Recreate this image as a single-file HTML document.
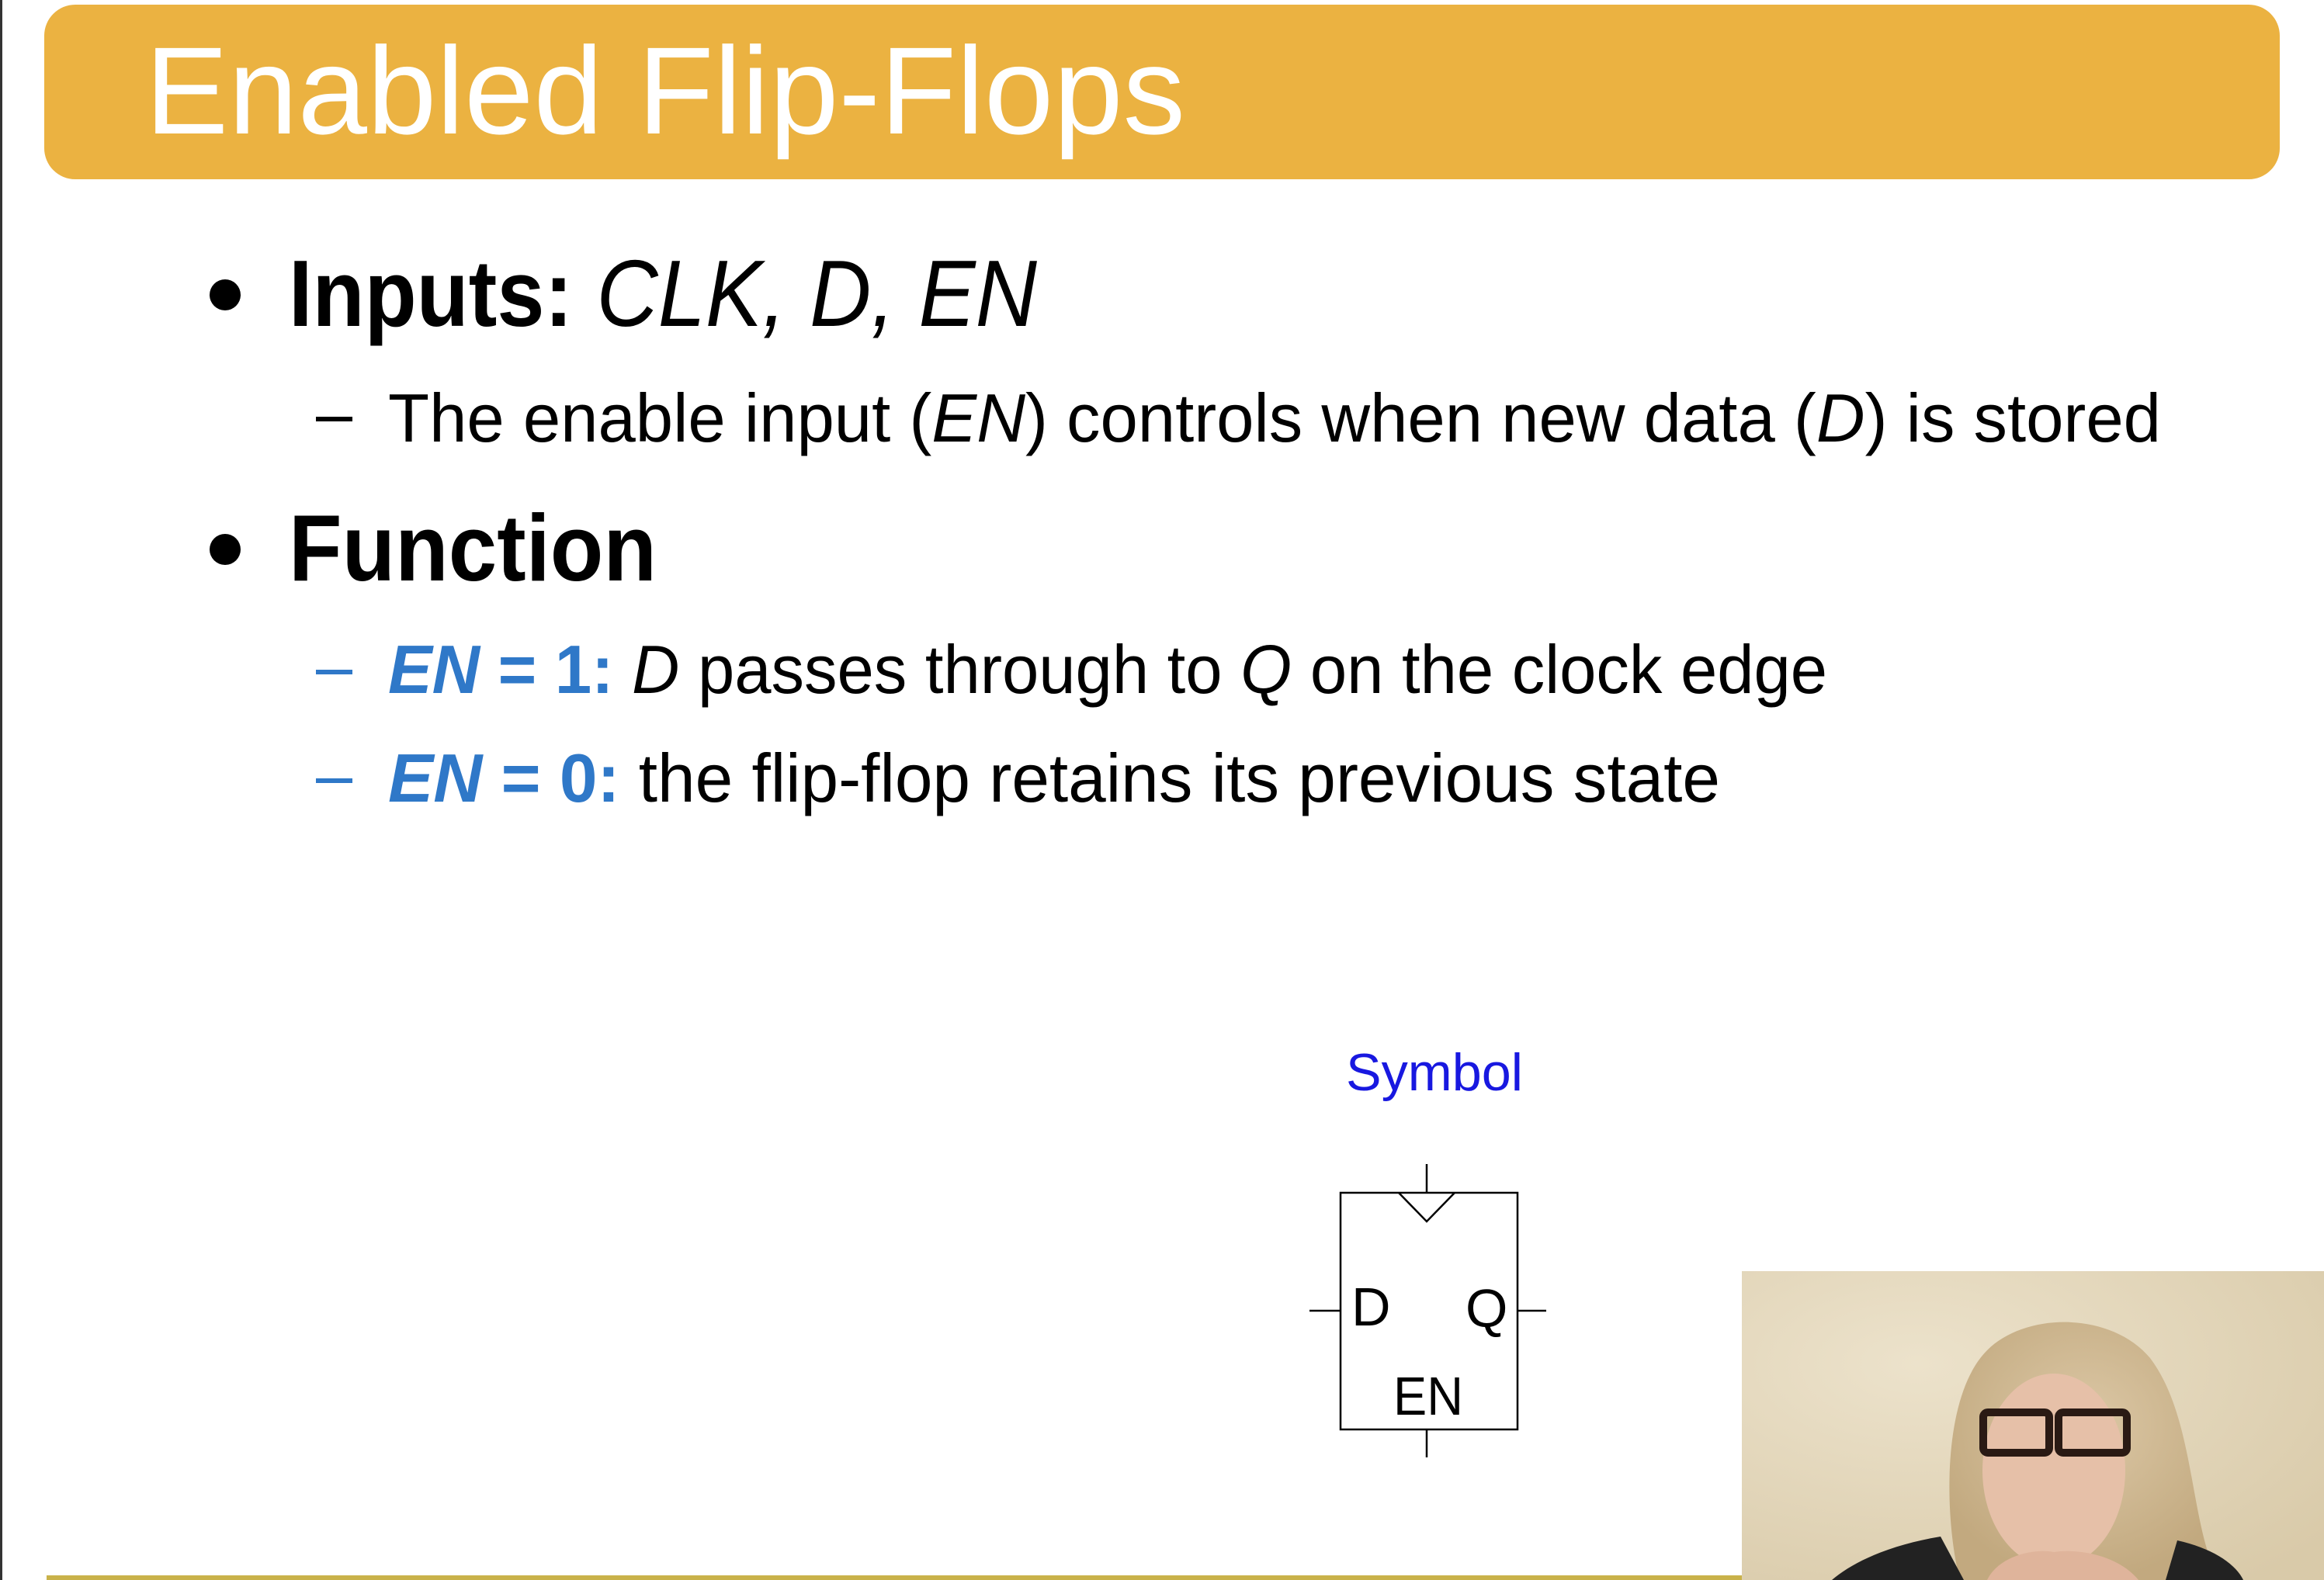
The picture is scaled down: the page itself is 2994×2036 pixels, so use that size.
<!DOCTYPE html>
<html><head><meta charset="utf-8"><style>
html,body{margin:0;padding:0;background:#fff;width:2994px;height:2036px;overflow:hidden}
svg{display:block}
</style></head><body>
<svg width="2994" height="2036" viewBox="0 0 2994 2036" xmlns="http://www.w3.org/2000/svg" font-family="'Liberation Sans', sans-serif">
<defs>
<radialGradient id="bg" cx="0.3" cy="0.3" r="0.9"><stop offset="0" stop-color="#ece2cb"/><stop offset="1" stop-color="#d9caa9"/></radialGradient>
<radialGradient id="hair" cx="0.5" cy="0.4" r="0.6"><stop offset="0" stop-color="#dcc8a6"/><stop offset="1" stop-color="#c2a97f"/></radialGradient>
</defs>
<rect x="0" y="0" width="3" height="2036" fill="#333"/>
<rect x="57" y="6" width="2880" height="225" rx="40" fill="#EBB241"/>
<text x="187" y="172" font-size="160" fill="#fff" textLength="1340" lengthAdjust="spacingAndGlyphs">Enabled Flip-Flops</text>

<circle cx="290" cy="380" r="20" fill="#000"/>
<text x="372" y="420" font-size="122" fill="#000" textLength="964" lengthAdjust="spacingAndGlyphs"><tspan font-weight="bold">Inputs: </tspan><tspan font-style="italic">CLK, D, EN</tspan></text>

<rect x="407" y="537" width="47" height="6" fill="#000"/>
<text x="500" y="569" font-size="88" fill="#000" textLength="2284" lengthAdjust="spacingAndGlyphs">The enable input (<tspan font-style="italic">EN</tspan>) controls when new data (<tspan font-style="italic">D</tspan>) is stored</text>

<circle cx="290" cy="708" r="20" fill="#000"/>
<text x="372" y="748" font-size="122" font-weight="bold" fill="#000" textLength="474" lengthAdjust="spacingAndGlyphs">Function</text>

<rect x="407" y="863" width="47" height="6" fill="#2F78C8"/>
<text x="500" y="893" font-size="88" fill="#000" textLength="1854" lengthAdjust="spacingAndGlyphs"><tspan fill="#2F78C8" font-weight="bold"><tspan font-style="italic">EN</tspan> = 1: </tspan><tspan font-style="italic">D</tspan> passes through to <tspan font-style="italic">Q</tspan> on the clock edge</text>

<rect x="407" y="1003" width="47" height="6" fill="#2F78C8"/>
<text x="500" y="1033" font-size="88" fill="#000" textLength="1716" lengthAdjust="spacingAndGlyphs"><tspan fill="#2F78C8" font-weight="bold"><tspan font-style="italic">EN</tspan> = 0: </tspan>the flip-flop retains its previous state</text>

<text x="1734" y="1405" font-size="68" fill="#1818E0" textLength="228" lengthAdjust="spacingAndGlyphs">Symbol</text>

<g stroke="#000" stroke-width="2.5" fill="none">
<rect x="1727" y="1537" width="228" height="305"/>
<line x1="1838" y1="1500" x2="1838" y2="1537"/>
<polyline points="1802,1537 1838,1574 1874,1537"/>
<line x1="1838" y1="1842" x2="1838" y2="1878"/>
<line x1="1687" y1="1689" x2="1727" y2="1689"/>
<line x1="1955" y1="1689" x2="1992" y2="1689"/>
</g>
<text x="1741" y="1708" font-size="70" fill="#000">D</text>
<text x="1888" y="1710" font-size="70" fill="#000">Q</text>
<text x="1795" y="1823" font-size="70" fill="#000" textLength="90" lengthAdjust="spacingAndGlyphs">EN</text>

<rect x="60" y="2030" width="2184" height="6" fill="#c9b24a"/>

<g>
<rect x="2244" y="1638" width="750" height="398" fill="url(#bg)"/>
<path d="M2525 2036 C2505 1960 2500 1800 2560 1740 C2610 1690 2720 1690 2770 1750 C2830 1830 2820 1970 2860 2036 Z" fill="url(#hair)"/>
<ellipse cx="2646" cy="1895" rx="92" ry="125" fill="#e6c0a8"/>
<rect x="2555" y="1820" width="85" height="52" rx="6" fill="none" stroke="#2a1a14" stroke-width="10"/>
<rect x="2652" y="1820" width="88" height="52" rx="6" fill="none" stroke="#2a1a14" stroke-width="10"/>
<path d="M2560 2036 C2575 2005 2620 1995 2646 2000 C2680 1995 2730 2005 2755 2036 Z" fill="#dfb49b"/>
<path d="M2360 2036 C2390 2010 2440 1990 2500 1980 L2530 2036 Z" fill="#222"/>
<path d="M2790 2036 L2805 1985 C2850 1995 2880 2015 2890 2036 Z" fill="#222"/>
</g>
</svg>
</body></html>
